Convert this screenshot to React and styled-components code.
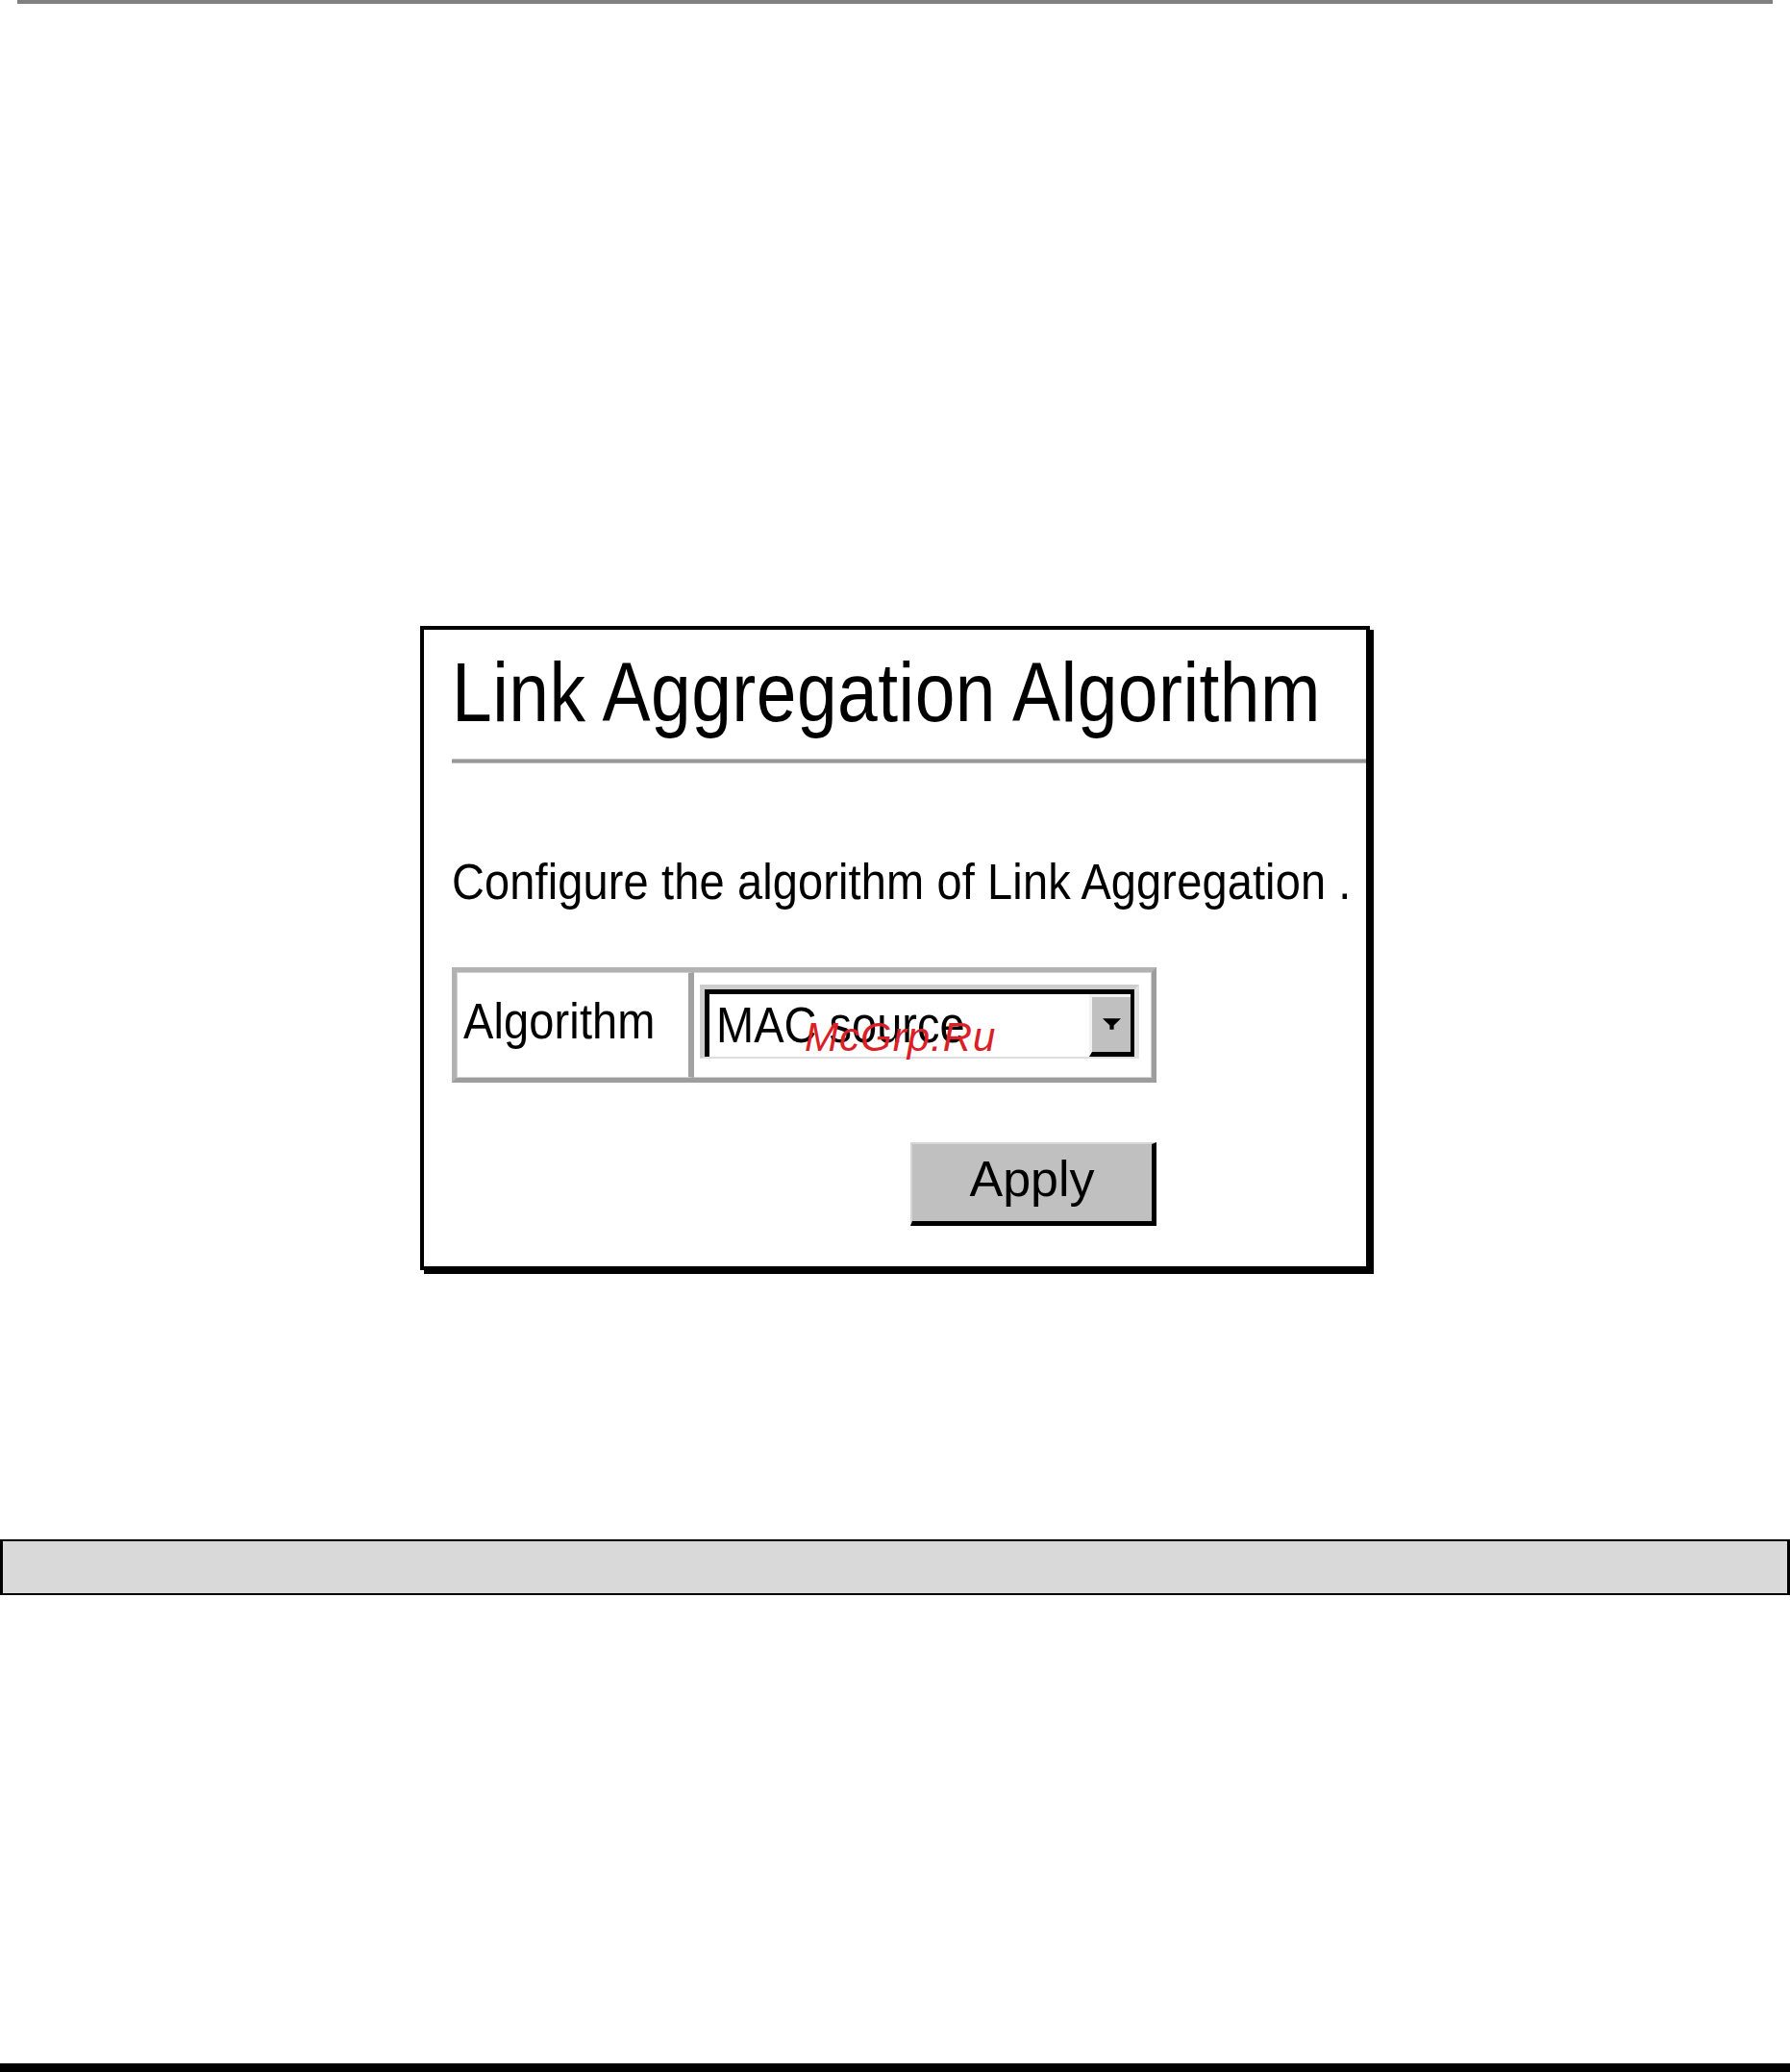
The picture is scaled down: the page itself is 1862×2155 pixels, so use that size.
import React from 'react'
import styled, { createGlobalStyle } from 'styled-components'

const GlobalStyle = createGlobalStyle`
  html, body {
    margin: 0;
    padding: 0;
    background: #fff;
  }
  body {
    font-family: 'Liberation Sans', Arial, sans-serif;
    color: #000;
  }
`

const Page = styled.div`
  width: 1862px;
  height: 2155px;
  display: flex;
  flex-direction: column;
  overflow: hidden;
`

const TopRule = styled.div`
  height: 4px;
  margin-left: 18px;
  width: 1826px;
  background: #808080;
`

const Panel = styled.section`
  box-sizing: border-box;
  margin: 647px 0 0 437px;
  width: 988px;
  height: 670px;
  border: 4px solid #000;
  box-shadow: 4px 4px 0 #000;
  padding: 0 0 0 29px;
  display: flex;
  flex-direction: column;
`

const Heading = styled.h1`
  margin: 32px 0 0;
  font-size: 75px;
  line-height: 75px;
  font-weight: normal;
  letter-spacing: 0.45px;
  white-space: nowrap;
  transform: scaleY(1.15);
  transform-origin: 0 63.5px;
`

const Rule = styled.div`
  margin-top: 27px;
  height: 3px;
  background: #979797;
  border-top: 1px solid #c6c6c6;
  border-bottom: 1px solid #bcbcbc;
`

const Text = styled.p`
  margin: ${(p) => p.$top || 0}px 0 0;
  font-size: 47px;
  line-height: 47px;
  letter-spacing: 0.12px;
  white-space: nowrap;
  transform: scaleY(1.1);
  transform-origin: 0 40px;
`

const Table = styled.div`
  box-sizing: border-box;
  margin-top: 64px;
  width: 733px;
  height: 120px;
  display: flex;
  border: 5px solid #a9a9a9;
  border-color: #b2b2b2 #9d9d9d #9d9d9d #b2b2b2;
`

const LabelCell = styled.div`
  box-sizing: border-box;
  width: 247px;
  padding: 28px 0 0 6px;
  border: 1px solid #d2d2d2;
  border-right: 6px solid #a2a2a2;
`

const ValueCell = styled.div`
  flex: 1;
  box-sizing: border-box;
  padding: 12px 12px 19px 6px;
  border: 1px solid #d2d2d2;
  border-left: 0;
`

const Select = styled.div`
  box-sizing: border-box;
  height: 100%;
  border: 5px solid #cdcdcd;
  border-right-color: #e2e2e2;
  border-bottom: 2px solid #dedede;
  display: flex;
`

const SelectField = styled.div`
  position: relative;
  flex: 1;
  display: flex;
  justify-content: space-between;
  background: #fff;
  border-top: 5px solid #000;
  border-left: 5px solid #000;
  border-right: 4px solid #000;
`

const SelectValue = styled.span`
  padding: 10px 0 0 7px;
  font-size: 47px;
  line-height: 47px;
  white-space: nowrap;
  transform: scaleY(1.1);
  transform-origin: 0 50px;
`

const DropButton = styled.div`
  box-sizing: border-box;
  width: 43px;
  height: 100%;
  background: #c0c0c0;
  border-top: 3px solid #f2f2f2;
  border-left: 3px solid #f2f2f2;
  border-bottom: 5px solid #000;
  display: flex;
  justify-content: center;
  padding-top: 22px;
`

const Watermark = styled.span`
  position: absolute;
  left: 99px;
  top: 24px;
  font-size: 42px;
  line-height: 42px;
  font-style: italic;
  letter-spacing: 1px;
  color: #db1f27;
  white-space: nowrap;
`

const ButtonRow = styled.div`
  width: 733px;
  margin-top: 62px;
  display: flex;
  justify-content: flex-end;
`

const Button = styled.button`
  box-sizing: border-box;
  width: 256px;
  height: 87px;
  padding: 0 0 8px;
  background: #c0c0c0;
  border: 0;
  border-top: 2px solid #d6d6d6;
  border-left: 2px solid #d6d6d6;
  border-right: 5px solid #000;
  border-bottom: 5px solid #000;
  font-family: 'Liberation Sans', Arial, sans-serif;
  font-size: 52px;
  line-height: 52px;
  color: #000;
`

const StatusBar = styled.div`
  box-sizing: border-box;
  margin-top: 280px;
  height: 58px;
  background: #d9d9d9;
  border: 3px solid #000;
  border-top-width: 2px;
  border-bottom-width: 2px;
`

const FooterRule = styled.div`
  margin-top: auto;
  height: 9px;
  background: #000;
`

const Arrow = () => (
  <svg width='19' height='12' viewBox='0 0 18 11'>
    <path d='M0 0h18L11 7v4H7V7z' fill='#000' />
  </svg>
)

export default function App() {
  return (
    <Page>
      <GlobalStyle />
      <TopRule />
      <Panel>
        <Heading>Link Aggregation Algorithm</Heading>
        <Rule />
        <Text $top={101}>Configure the algorithm of Link Aggregation .</Text>
        <Table>
          <LabelCell>
            <Text>Algorithm</Text>
          </LabelCell>
          <ValueCell>
            <Select>
              <SelectField>
                <SelectValue>MAC source</SelectValue>
                <DropButton>
                  <Arrow />
                </DropButton>
                <Watermark>McGrp.Ru</Watermark>
              </SelectField>
            </Select>
          </ValueCell>
        </Table>
        <ButtonRow>
          <Button type='button'>Apply</Button>
        </ButtonRow>
      </Panel>
      <StatusBar />
      <FooterRule />
    </Page>
  )
}
